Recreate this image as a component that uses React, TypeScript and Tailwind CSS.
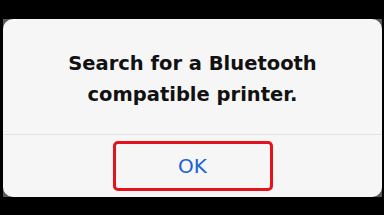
export default function App() {
  return (
    <div className="w-[384px] h-[215px] bg-black pt-[19px] pl-[3px]">
      <div className="w-[379px] h-[178px] bg-[#5a5a5a]">
        <div className="h-full rounded-[10px] bg-[#f6f6f6] flex flex-col">
          <div className="h-[115px] pt-[29px] text-center font-['DejaVu_Sans',sans-serif] font-bold text-[19.5px] leading-[31px] text-[#111]">
            <p>Search for a Bluetooth</p>
            <p>compatible printer.</p>
          </div>
          <div className="h-px bg-[#e3e3e3]" />
          <div className="flex justify-center pt-[6px]">
            <button className="w-[160px] h-[50px] border-[3px] border-[#e5121b] rounded-[5px] flex items-center justify-center font-['DejaVu_Sans',sans-serif] text-[20px] text-[#1b5fd8]">
              OK
            </button>
          </div>
        </div>
      </div>
    </div>
  );
}
